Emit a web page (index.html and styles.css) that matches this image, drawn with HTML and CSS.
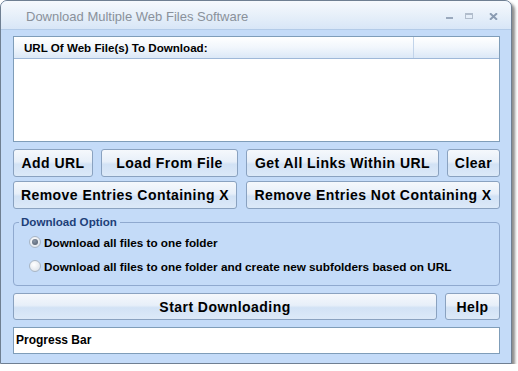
FILE: index.html
```html
<!DOCTYPE html>
<html>
<head>
<meta charset="utf-8">
<link rel="stylesheet" href="styles.css">
</head>
<body>
<div class="window">
  <div class="titlebar">
    <span class="title">Download Multiple Web Files Software</span>
    <div class="controls">
      <span class="ctl min"></span>
      <span class="ctl max"></span>
      <span class="ctl close">
        <svg width="9" height="7" viewBox="0 0 9 7"><path d="M1 0.3 L8 6.7 M8 0.3 L1 6.7" stroke="#8a9bb2" stroke-width="2"/></svg>
      </span>
    </div>
  </div>
  <div class="client">
    <div class="listbox">
      <div class="listhead">
        <div class="col1">URL Of Web File(s) To Download:</div>
        <div class="col2"></div>
      </div>
    </div>
    <div class="row r1">
      <button class="btn w-add">Add URL</button>
      <button class="btn w-load">Load From File</button>
      <button class="btn w-get">Get All Links Within URL</button>
      <button class="btn w-clear">Clear</button>
    </div>
    <div class="row r2">
      <button class="btn w-rem">Remove Entries Containing X</button>
      <button class="btn w-remnot">Remove Entries Not Containing X</button>
    </div>
    <div class="group">
      <div class="legend">Download Option</div>
      <div class="radio"><span class="dot on"></span>Download all files to one folder</div>
      <div class="radio"><span class="dot"></span>Download all files to one folder and create new subfolders based on URL</div>
    </div>
    <div class="row r3">
      <button class="btn w-start">Start Downloading</button>
      <button class="btn w-help">Help</button>
    </div>
    <div class="progress">Progress Bar</div>
  </div>
</div>
</body>
</html>
```
FILE: styles.css
```css
html, body {
  margin: 0;
  padding: 0;
  background: #ffffff;
}
body {
  font-family: "Liberation Sans", Arial, sans-serif;
}
*, *::before, *::after {
  box-sizing: border-box;
}
.window {
  width: 512px;
  height: 364px;
  border: 1px solid #6f7f92;
  border-radius: 7px 7px 0 0;
  background: #c4dbf8;
  box-shadow: 3px 3px 3px rgba(0,0,0,0.45);
  display: flex;
  flex-direction: column;
  overflow: hidden;
}
.titlebar {
  height: 29px;
  flex: none;
  background: linear-gradient(#f6f9fd, #e4eef9 60%, #d8e6f7);
  border-bottom: 1px solid #b3cbe8;
  display: flex;
  align-items: center;
  padding-left: 25px;
  padding-right: 13px;
}
.title {
  font-size: 13px;
  color: #8a919b;
  flex: 1;
  padding-top: 2px;
}
.controls {
  display: flex;
  align-items: center;
  padding-top: 2px;
}
.ctl {
  display: block;
  position: relative;
}
.min {
  width: 7px;
  height: 7px;
  margin-right: 12px;
}
.min::after {
  content: "";
  position: absolute;
  left: 0;
  top: 4px;
  width: 7px;
  height: 2px;
  background: #9aa9bd;
}
.max {
  border: 1px solid #b1bdcc;
  border-top: 2px solid #b1bdcc;
  width: 8px;
  height: 6px;
  margin-right: 16px;
}
.close {
  width: 9px;
  height: 7px;
}
.close svg { display: block; }
.client {
  flex: 1;
  padding: 6px 11px 0 12px;
  display: flex;
  flex-direction: column;
}
.listbox {
  height: 106px;
  background: #ffffff;
  border: 1px solid #7f9db9;
  flex: none;
}
.listhead {
  height: 22px;
  display: flex;
  background: linear-gradient(#ffffff, #f1f6fc 50%, #dbe8f7);
  border-bottom: 1px solid #9fb8d8;
}
.col1 {
  width: 400px;
  border-right: 1px solid #c2d4ea;
  font-size: 11.6px;
  font-weight: bold;
  color: #000;
  padding-left: 10px;
  line-height: 21px;
}
.col2 { flex: 1; }
.row {
  display: flex;
  flex: none;
  gap: 8px;
}
.r1 { margin-top: 7px; height: 28px; }
.r2 { margin-top: 4px; height: 28px; }
.btn {
  font-family: "Liberation Sans", Arial, sans-serif;
  font-weight: bold;
  font-size: 14px;
  letter-spacing: 0.45px;
  color: #000;
  border: 1px solid #8aa2c0;
  border-radius: 3px;
  background: linear-gradient(#f5f8fc, #e7eff9 45%, #d2e2f5 55%, #dce9f8);
  padding: 0;
  margin: 0;
  height: 100%;
}
.w-add { width: 80px; }
.w-load { width: 137px; }
.w-get { width: 193px; }
.w-clear { flex: 1; }
.w-rem { width: 224px; }
.w-remnot { flex: 1; margin-left: 1px; }
.group {
  margin-top: 13px;
  height: 64px;
  border: 1px solid #8fa9cf;
  border-radius: 4px;
  position: relative;
  padding-top: 11px;
  padding-left: 15px;
  flex: none;
}
.legend {
  position: absolute;
  top: -8px;
  left: 5px;
  padding: 0 3px 0 2px;
  background: #c4dbf8;
  color: #1e3f78;
  font-size: 11.6px;
  font-weight: bold;
}
.radio {
  display: flex;
  align-items: center;
  font-size: 11.75px;
  font-weight: bold;
  color: #000;
  height: 16px;
  margin-bottom: 8px;
}
.dot {
  width: 12px;
  height: 12px;
  border-radius: 50%;
  border: 1px solid #a9b6c5;
  background: radial-gradient(circle at 40% 35%, #ffffff, #d6dde6);
  margin-right: 3px;
  position: relative;
  flex: none;
}
.dot.on::after {
  content: "";
  position: absolute;
  left: 2px;
  top: 2px;
  width: 6px;
  height: 6px;
  border-radius: 50%;
  background: radial-gradient(circle at 40% 35%, #8a96a6, #4f5b6b);
}
.r3 { margin-top: 7px; height: 27px; }
.w-start { width: 424px; }
.w-help { flex: 1; }
.progress {
  margin-top: 7px;
  height: 27px;
  background: #ffffff;
  border: 1px solid #7f9db9;
  font-size: 12px;
  font-weight: bold;
  line-height: 25px;
  padding-left: 2px;
  flex: none;
}
```
